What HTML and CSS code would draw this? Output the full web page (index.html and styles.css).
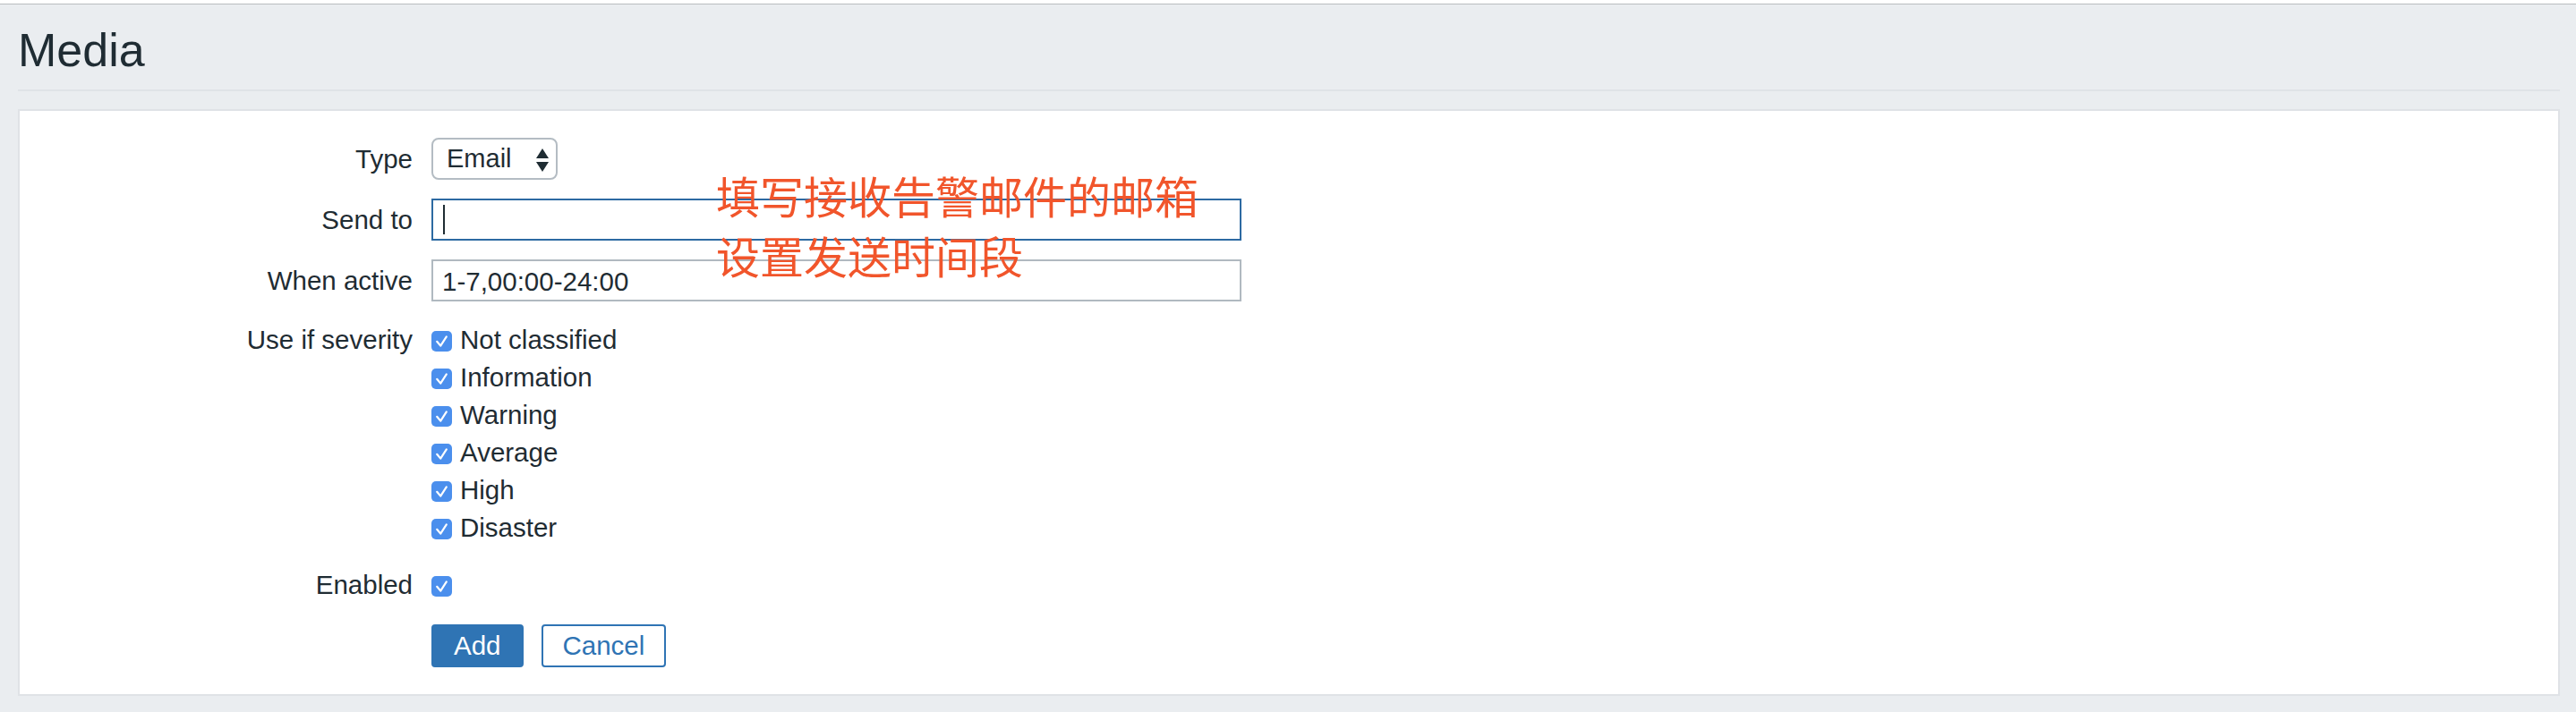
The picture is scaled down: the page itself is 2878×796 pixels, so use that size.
FILE: index.html
```html
<!DOCTYPE html>
<html lang="en">
<head>
<meta charset="utf-8">
<title>Media</title>
<link rel="stylesheet" href="styles.css">
</head>
<body>
<div class="topbar"></div>
<header class="page-header">
  <h1 class="page-title">Media</h1>
</header>
<main class="panel">
  <form class="form">
    <div class="row">
      <label class="row-label">Type</label>
      <div class="select">
        <span class="select-value">Email</span>
        <svg class="select-arrows" viewBox="0 0 14 26" width="14" height="26" aria-hidden="true">
          <polygon points="7,0 14,11 0,11"/>
          <polygon points="0,15 14,15 7,26"/>
        </svg>
      </div>
    </div>
    <div class="row">
      <label class="row-label">Send to</label>
      <div class="text-input text-input-focused"><span class="caret"></span></div>
    </div>
    <div class="row">
      <label class="row-label">When active</label>
      <div class="text-input"><span class="input-value">1-7,00:00-24:00</span></div>
    </div>
    <div class="row row-top row-severity">
      <label class="row-label row-label-list">Use if severity</label>
      <div class="checklist">
        <div class="check-item"><span class="cb"><svg viewBox="0 0 23 23" width="23" height="23"><path d="M6.2 11.8 L10.2 16.6 L16.8 6.4"/></svg></span><span>Not classified</span></div>
        <div class="check-item"><span class="cb"><svg viewBox="0 0 23 23" width="23" height="23"><path d="M6.2 11.8 L10.2 16.6 L16.8 6.4"/></svg></span><span>Information</span></div>
        <div class="check-item"><span class="cb"><svg viewBox="0 0 23 23" width="23" height="23"><path d="M6.2 11.8 L10.2 16.6 L16.8 6.4"/></svg></span><span>Warning</span></div>
        <div class="check-item"><span class="cb"><svg viewBox="0 0 23 23" width="23" height="23"><path d="M6.2 11.8 L10.2 16.6 L16.8 6.4"/></svg></span><span>Average</span></div>
        <div class="check-item"><span class="cb"><svg viewBox="0 0 23 23" width="23" height="23"><path d="M6.2 11.8 L10.2 16.6 L16.8 6.4"/></svg></span><span>High</span></div>
        <div class="check-item"><span class="cb"><svg viewBox="0 0 23 23" width="23" height="23"><path d="M6.2 11.8 L10.2 16.6 L16.8 6.4"/></svg></span><span>Disaster</span></div>
      </div>
    </div>
    <div class="row row-top row-enabled">
      <label class="row-label row-label-list">Enabled</label>
      <div class="checklist">
        <div class="check-item"><span class="cb"><svg viewBox="0 0 23 23" width="23" height="23"><path d="M6.2 11.8 L10.2 16.6 L16.8 6.4"/></svg></span></div>
      </div>
    </div>
    <div class="row row-buttons">
      <span class="row-label"></span>
      <div class="buttons">
        <button type="button" class="btn btn-primary">Add</button>
        <button type="button" class="btn btn-alt">Cancel</button>
      </div>
    </div>
  </form>
  <div class="annotation">
    <div>填写接收告警邮件的邮箱</div>
    <div>设置发送时间段</div>
  </div>
</main>
</body>
</html>
```
FILE: styles.css
```css
html, body {
  margin: 0;
  padding: 0;
}

body {
  background: #eaedf0;
  font-family: "Liberation Sans", Arial, sans-serif;
  color: #1f2c33;
  font-size: 29.5px;
}

.topbar {
  height: 4px;
  background: #ffffff;
  border-bottom: 1px solid #b9bcbf;
}

.page-header {
  margin: 21px 18px 0 20px;
  padding-bottom: 13px;
  border-bottom: 2px solid #dfe3e7;
}

.page-title {
  margin: 0;
  font-size: 52px;
  line-height: 61px;
  font-weight: 400;
  color: #1f2c33;
}

.panel {
  position: relative;
  margin: 20px 18px 0 20px;
  background: #ffffff;
  border: 2px solid #dfe2e6;
  padding: 30px 0 30px 0;
}

.form {
  display: flex;
  flex-direction: column;
  gap: 21px;
}

.row {
  display: flex;
  align-items: center;
  gap: 21px;
}

.row-top {
  align-items: flex-start;
}

.row-severity,
.row-enabled {
  margin-top: 1px;
}

.row-buttons {
  margin-top: 2px;
}

.row-label {
  flex: 0 0 439px;
  width: 439px;
  text-align: right;
  color: #1f2c33;
}

.row-label-list {
  line-height: 42px;
}

.select {
  box-sizing: border-box;
  width: 141px;
  height: 47px;
  border: 2px solid #b4bcc3;
  border-radius: 8px;
  display: flex;
  align-items: center;
  padding: 0 8px 0 15px;
  font-size: 29px;
  background: #ffffff;
}

.select-value {
  flex: 1;
}

.select-arrows {
  display: block;
  fill: #1f2c33;
  margin-top: 3px;
}

.text-input {
  box-sizing: border-box;
  width: 905px;
  height: 47px;
  border: 2px solid #b0b9c0;
  display: flex;
  align-items: center;
  padding: 3px 0 0 10px;
  background: #ffffff;
}

.text-input-focused {
  border-color: #2d6aa2;
  padding-top: 0;
}

.caret {
  display: block;
  width: 2px;
  height: 33px;
  margin-left: 1px;
  background: #1f2c33;
}

.checklist {
  display: flex;
  flex-direction: column;
}

.check-item {
  height: 42px;
  display: flex;
  align-items: center;
  line-height: 42px;
}

.cb {
  display: block;
  width: 23px;
  height: 23px;
  border-radius: 5px;
  background: #4b8fed;
  margin-right: 9px;
  margin-top: 3px;
  flex: 0 0 23px;
}

.cb svg {
  display: block;
}

.cb path {
  fill: none;
  stroke: #ffffff;
  stroke-width: 2.2;
  stroke-linecap: round;
  stroke-linejoin: round;
}

.buttons {
  display: flex;
  gap: 20px;
}

.btn {
  box-sizing: border-box;
  height: 48px;
  border-radius: 4px;
  border: 2px solid #2f74b4;
  font-family: "Liberation Sans", Arial, sans-serif;
  font-size: 29.5px;
  line-height: 1;
  margin: 0;
  cursor: pointer;
}

.btn-primary {
  background: #2f74b4;
  color: #ffffff;
  padding: 0 23px;
}

.btn-alt {
  background: #ffffff;
  color: #2f74b4;
  padding: 0 22px;
}

.annotation {
  position: absolute;
  left: 778px;
  top: 60px;
  font-family: "Noto Sans CJK SC", "Noto Sans CJK JP", sans-serif;
  font-size: 49px;
  line-height: 67px;
  color: #f1552b;
  white-space: nowrap;
  pointer-events: none;
}
```
